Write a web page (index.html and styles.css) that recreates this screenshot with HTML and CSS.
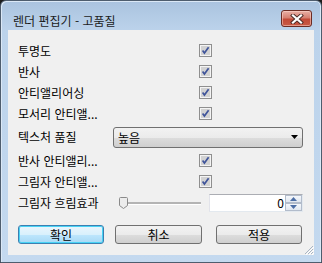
FILE: index.html
```html
<!DOCTYPE html>
<html lang="ko">
<head>
  <meta charset="UTF-8" />
  <title>렌더 편집기 - 고품질</title>
  <link rel="stylesheet" href="styles.css">
</head>
<body>
  <div class="window">
    <!-- TITLE BAR -->
    <div class="titlebar">
      <span class="title">렌더 편집기 - 고품질</span>
      <div class="close">
        <svg width="16" height="10" viewBox="0 0 16 10">
          <path d="M4 1.5 L12 8.5 M12 1.5 L4 8.5" stroke="#4a2a26" stroke-width="4" stroke-linecap="square"/>
          <path d="M4 1.5 L12 8.5 M12 1.5 L4 8.5" stroke="#fff" stroke-width="2.2" stroke-linecap="square"/>
        </svg>
      </div>
    </div>

    <!-- CLIENT -->
    <div class="client">
      <div class="row">
        <span class="label">투명도</span>
        <span class="check"><svg width="13" height="13" viewBox="0 0 13 13"><rect x=".5" y=".5" width="12" height="12" fill="#f4f4f4" stroke="#8f8f8f"/><rect x="2" y="2" width="9" height="9" fill="#d2d2d2"/><path d="M3.6 6.6 L5.4 9 L9.6 3.2" fill="none" stroke="#3f549a" stroke-width="1.7"/></svg></span>
      </div>
      <div class="row">
        <span class="label">반사</span>
        <span class="check"><svg width="13" height="13" viewBox="0 0 13 13"><rect x=".5" y=".5" width="12" height="12" fill="#f4f4f4" stroke="#8f8f8f"/><rect x="2" y="2" width="9" height="9" fill="#d2d2d2"/><path d="M3.6 6.6 L5.4 9 L9.6 3.2" fill="none" stroke="#3f549a" stroke-width="1.7"/></svg></span>
      </div>
      <div class="row">
        <span class="label">안티앨리어싱</span>
        <span class="check"><svg width="13" height="13" viewBox="0 0 13 13"><rect x=".5" y=".5" width="12" height="12" fill="#f4f4f4" stroke="#8f8f8f"/><rect x="2" y="2" width="9" height="9" fill="#d2d2d2"/><path d="M3.6 6.6 L5.4 9 L9.6 3.2" fill="none" stroke="#3f549a" stroke-width="1.7"/></svg></span>
      </div>
      <div class="row">
        <span class="label">모서리 안티앨...</span>
        <span class="check"><svg width="13" height="13" viewBox="0 0 13 13"><rect x=".5" y=".5" width="12" height="12" fill="#f4f4f4" stroke="#8f8f8f"/><rect x="2" y="2" width="9" height="9" fill="#d2d2d2"/><path d="M3.6 6.6 L5.4 9 L9.6 3.2" fill="none" stroke="#3f549a" stroke-width="1.7"/></svg></span>
      </div>
      <div class="row row-combo">
        <span class="label">텍스처 품질</span>
        <div class="combo">
          <span>높음</span>
          <svg width="7" height="4" viewBox="0 0 7 4"><path d="M0 0 H7 L3.5 4 Z" fill="#000"/></svg>
        </div>
      </div>
      <div class="row row-gap">
        <span class="label">반사 안티앨리...</span>
        <span class="check"><svg width="13" height="13" viewBox="0 0 13 13"><rect x=".5" y=".5" width="12" height="12" fill="#f4f4f4" stroke="#8f8f8f"/><rect x="2" y="2" width="9" height="9" fill="#d2d2d2"/><path d="M3.6 6.6 L5.4 9 L9.6 3.2" fill="none" stroke="#3f549a" stroke-width="1.7"/></svg></span>
      </div>
      <div class="row">
        <span class="label">그림자 안티앨...</span>
        <span class="check"><svg width="13" height="13" viewBox="0 0 13 13"><rect x=".5" y=".5" width="12" height="12" fill="#f4f4f4" stroke="#8f8f8f"/><rect x="2" y="2" width="9" height="9" fill="#d2d2d2"/><path d="M3.6 6.6 L5.4 9 L9.6 3.2" fill="none" stroke="#3f549a" stroke-width="1.7"/></svg></span>
      </div>
      <div class="row row-slider">
        <span class="label">그림자 흐림효과</span>
        <div class="slider">
          <span class="thumb"><svg width="9" height="12" viewBox="0 0 9 12"><path d="M.5 1.5 Q.5 .5 1.5 .5 H7.5 Q8.5 .5 8.5 1.5 V8.5 L4.5 11.5 L.5 8.5 Z" fill="#ececec" stroke="#8a8a8a"/></svg></span>
          <span class="track"></span>
        </div>
        <div class="spin">
          <span class="value">0</span>
          <div class="spin-btns">
            <span class="spin-btn"><svg width="7" height="4" viewBox="0 0 7 4"><path d="M0 4 H7 L3.5 0 Z" fill="#4d6fa6"/></svg></span>
            <span class="spin-btn"><svg width="7" height="4" viewBox="0 0 7 4"><path d="M0 0 H7 L3.5 4 Z" fill="#4d6fa6"/></svg></span>
          </div>
        </div>
      </div>

      <div class="buttons">
        <div class="btn default">확인</div>
        <div class="btn btn-mid">취소</div>
        <div class="btn btn-last">적용</div>
      </div>

      <!-- size grip -->
      <svg class="grip" width="10" height="10" viewBox="0 0 10 10">
        <path d="M9 1 L1 9 M9 4 L4 9 M9 7 L7 9" stroke="#a8b4c2" stroke-width="1"/>
        <path d="M10 2 L2 10 M10 5 L5 10 M10 8 L8 10" stroke="#fff" stroke-width="1"/>
      </svg>
    </div>
  </div>
</body>
</html>
```

FILE: styles.css
```css
/* ---------- BASE ---------- */
*{margin:0;padding:0;box-sizing:border-box;}
html,body{
  width:322px;height:263px;
  background:#1c1c1c;
  font-family:"Noto Sans CJK KR","Noto Sans",sans-serif;
  font-size:12px;
  color:#000;
  overflow:hidden;
}

/* ---------- WINDOW FRAME ---------- */
.window{
  width:322px;height:263px;
  border:1px solid #4e5d6e;
  border-radius:6px 6px 0 0;
  background:linear-gradient(#aac3df 0,#bcd3eb 30px,#c4d9ef 100%);
  box-shadow:inset 1px 1px 0 #dbe8f6,inset -1px 0 0 #dbe8f6;
}
.titlebar{
  height:29px;
  display:flex;align-items:flex-start;
  padding:0 9px 0 12px;
}
.title{
  margin-top:11px;
  line-height:17px;
  color:#1b1b1b;
}
.close{
  margin-left:auto;margin-top:9px;
  width:31px;height:17px;
  border:1px solid #6b2c24;
  border-radius:3px;
  background:linear-gradient(#e9b0a6 0,#d68071 45%,#c24a37 55%,#c85a45 100%);
  box-shadow:inset 0 0 0 1px rgba(255,220,210,.5);
  display:flex;align-items:center;justify-content:center;
}

/* ---------- CLIENT ---------- */
.client{
  position:relative;
  margin:0 7px;
  height:225px;
  background:#f0f0f0;
  padding:10px 0 0 10px;
}
.row{
  height:21px;
  display:flex;align-items:center;
}
.label{width:95px;white-space:nowrap;line-height:14px;}
.check{margin-left:86px;display:flex;}

.row-combo{height:22px;margin-top:2px;}
.row-gap{margin-top:2px;}
.row-slider{height:22px;}

/* ---------- COMBO ---------- */
.combo{
  width:190px;height:21px;
  border:1px solid #707070;
  border-radius:3px;
  background:linear-gradient(#f2f2f2 0,#ebebeb 50%,#dddddd 51%,#cfcfcf 100%);
  display:flex;align-items:center;
  padding:0 4px 0 4px;
}
.combo svg{margin-left:auto;}

/* ---------- SLIDER + SPIN ---------- */
.slider{
  position:relative;
  width:88px;height:14px;
  display:flex;align-items:center;
}
.track{
  margin-left:8px;
  flex:1;height:3px;
  border-top:2px solid #b4b4b4;
  border-bottom:1px solid #fff;
}
.thumb{position:absolute;left:6px;top:1px;display:flex;}
.spin{
  margin-left:8px;
  width:94px;height:18px;
  border:1px solid #abadb3;
  border-color:#abadb3 #e3e9ef #e3e9ef #e2e3ea;
  background:#fff;
  display:flex;align-items:stretch;
}
.value{flex:1;text-align:right;line-height:16px;padding-right:1px;}
.spin-btns{width:17px;display:flex;flex-direction:column;}
.spin-btn{
  flex:1;
  border:1px solid #b2bccb;
  background:linear-gradient(#f4f7fb,#dfe6ef);
  display:flex;align-items:center;justify-content:center;
}

/* ---------- BUTTONS ---------- */
.buttons{display:flex;margin-top:11px;}
.btn{
  width:86px;height:19px;
  border:1px solid #707070;
  border-radius:3px;
  background:linear-gradient(#f2f2f2 0,#ebebeb 50%,#dddddd 51%,#cfcfcf 100%);
  text-align:center;line-height:17px;
}
.btn.default{
  border-color:#3c7fb1;
  background:linear-gradient(#eaf6fd 0,#d9f0fc 50%,#bee6fd 51%,#a7d9f5 100%);
  box-shadow:inset 0 0 0 1px #48d3f5;
}
.btn-mid{margin-left:11px;width:87px;}
.btn-last{margin-left:14px;}

.grip{position:absolute;right:0;bottom:0;}
```
